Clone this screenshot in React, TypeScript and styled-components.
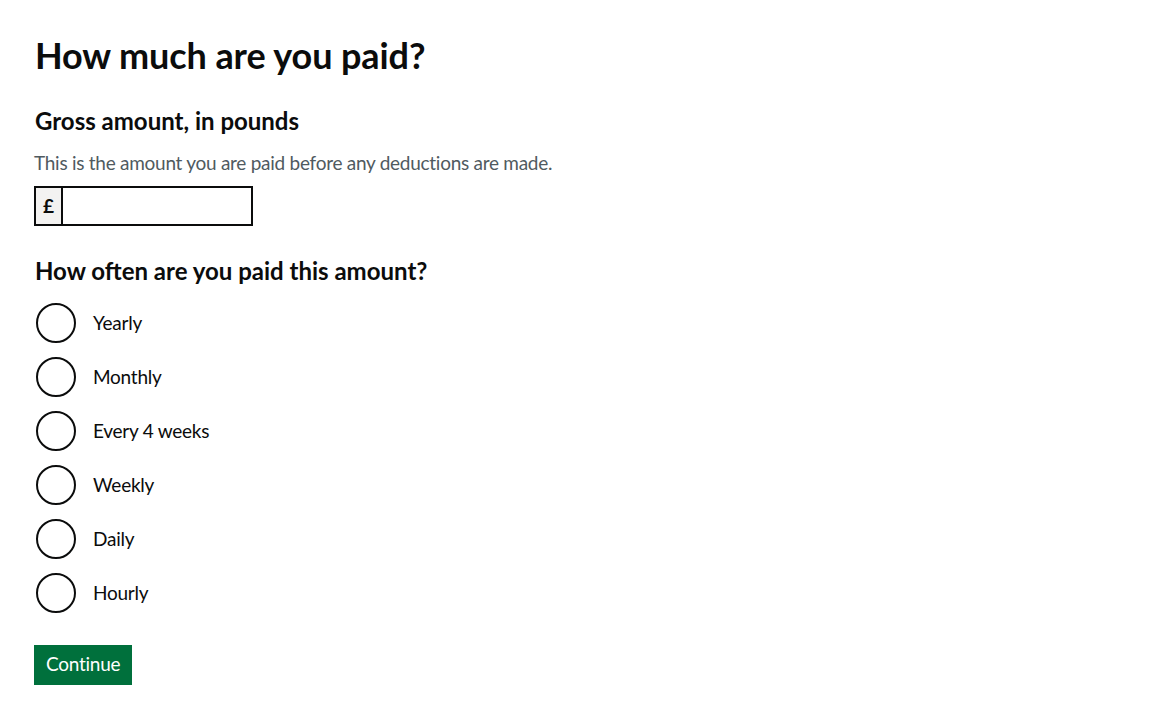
import React from "react";
import styled, { createGlobalStyle } from "styled-components";

const Global = createGlobalStyle`
  html, body { margin: 0; padding: 0; background: #fff; }
  body { font-family: Lato, "Noto Sans", "Liberation Sans", sans-serif; color: #0b0c0c; }
  * { box-sizing: border-box; }
`;

const Main = styled.main`
  padding: 35px 34px 0;
  display: flex;
  flex-direction: column;
  align-items: flex-start;
`;

const H1 = styled.h1`
  margin: 0 0 31px 1px;
  font-size: 36px;
  line-height: 40px;
  font-weight: 700;
  letter-spacing: -0.1px;
`;

const H2 = styled.h2<{ $mb: number }>`
  margin: 0 0 ${(p) => p.$mb}px 1px;
  font-size: 24px;
  line-height: 30px;
  font-weight: 700;
`;

const Hint = styled.p`
  margin: 0 0 11px;
  font-size: 19px;
  line-height: 24px;
  color: #505a5f;
  letter-spacing: -0.27px;
`;

const InputWrap = styled.div`
  display: flex;
  margin-bottom: 30px;
`;

const Prefix = styled.div`
  width: 27px;
  height: 40px;
  border: 2px solid #0b0c0c;
  border-right: 0;
  background: #f3f2f1;
  font-size: 19px;
  font-weight: 700;
  display: flex;
  align-items: center;
  justify-content: center;
  padding-bottom: 2px;
`;

const Input = styled.input`
  width: 192px;
  height: 40px;
  border: 2px solid #0b0c0c;
  margin: 0;
  padding: 5px;
  font: inherit;
  font-size: 19px;
  outline: none;
`;

const Radios = styled.div`
  display: flex;
  flex-direction: column;
  gap: 10px;
  margin-bottom: 30px;
`;

const RadioItem = styled.label`
  display: flex;
  align-items: center;
  height: 44px;
  cursor: pointer;
`;

const Circle = styled.span`
  width: 40px;
  height: 40px;
  border: 2px solid #0b0c0c;
  border-radius: 50%;
  margin-left: 2px;
  flex-shrink: 0;
`;

const RadioLabel = styled.span`
  margin-left: 17px;
  padding-bottom: 2px;
  font-size: 19px;
  line-height: 25px;
  letter-spacing: -0.25px;
`;

const Button = styled.button`
  border: 0;
  margin: 0;
  background: #00703c;
  color: #fff;
  font: inherit;
  font-size: 19px;
  line-height: 23px;
  padding: 6px 12px 9px;
  height: 40px;
  letter-spacing: -0.25px;
  box-shadow: 0 2px 0 #002d18;
  cursor: pointer;
`;

const options = ["Yearly", "Monthly", "Every 4 weeks", "Weekly", "Daily", "Hourly"];

export default function App() {
  return (
    <>
      <Global />
      <Main>
        <H1>How much are you paid?</H1>
        <H2 $mb={15}>Gross amount, in pounds</H2>
        <Hint>This is the amount you are paid before any deductions are made.</Hint>
        <InputWrap>
          <Prefix>£</Prefix>
          <Input type="text" />
        </InputWrap>
        <H2 $mb={15}>How often are you paid this amount?</H2>
        <Radios>
          {options.map((o) => (
            <RadioItem key={o}>
              <Circle />
              <RadioLabel>{o}</RadioLabel>
            </RadioItem>
          ))}
        </Radios>
        <Button>Continue</Button>
      </Main>
    </>
  );
}
